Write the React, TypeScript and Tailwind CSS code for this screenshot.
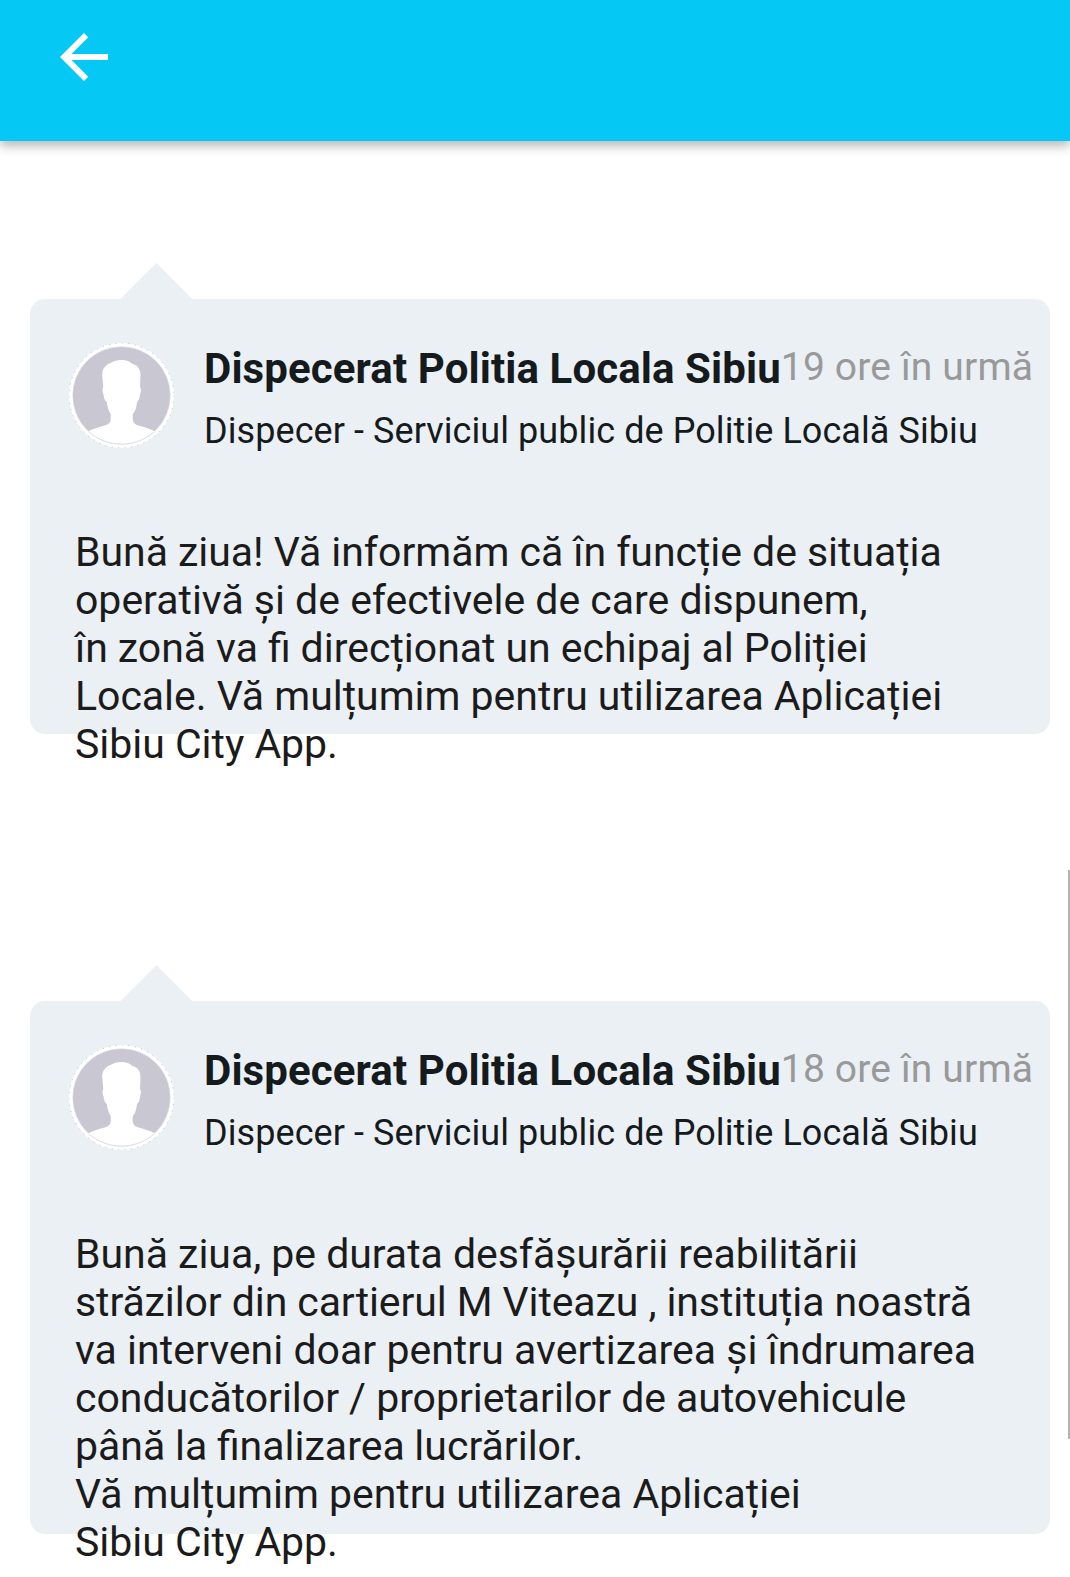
type Line = { text: string; tracking: string };

type Reply = {
  time: string;
  lines: Line[];
  height: string;
};

const replies: Reply[] = [
  {
    time: "19 ore în urmă",
    height: "h-[435px]",
    lines: [
      { text: "Bună ziua! Vă informăm că în funcție de situația", tracking: "tracking-[-0.04px]" },
      { text: "operativă și de efectivele de care dispunem,", tracking: "tracking-[-0.01px]" },
      { text: "în zonă va fi direcționat un echipaj al Poliției", tracking: "[word-spacing:-0.2px]" },
      { text: "Locale. Vă mulțumim pentru utilizarea Aplicației", tracking: "tracking-[-0.03px]" },
      { text: "Sibiu City App.", tracking: "tracking-[-0.03px]" },
    ],
  },
  {
    time: "18 ore în urmă",
    height: "h-[533px]",
    lines: [
      { text: "Bună ziua, pe durata desfășurării reabilitării", tracking: "tracking-[-0.035px]" },
      { text: "străzilor din cartierul M Viteazu , instituția noastră", tracking: "tracking-[-0.095px]" },
      { text: "va interveni doar pentru avertizarea și îndrumarea", tracking: "tracking-[0.02px]" },
      { text: "conducătorilor / proprietarilor de autovehicule", tracking: "tracking-[-0.035px]" },
      { text: "până la finalizarea lucrărilor.", tracking: "[word-spacing:-0.5px]" },
      { text: "Vă mulțumim pentru utilizarea Aplicației", tracking: "tracking-[-0.02px]" },
      { text: "Sibiu City App.", tracking: "tracking-[-0.03px]" },
    ],
  },
];

function Avatar() {
  return (
    <svg viewBox="0.5 0.5 105 105" className="mr-[30px] size-[105px] shrink-0">
      <circle cx="53" cy="53" r="52.5" fill="#fff" />
      <circle cx="53" cy="53" r="52.4" fill="none" stroke="#7f8688" strokeWidth="0.5" strokeDasharray="1 5.5" />
      <circle cx="53" cy="53" r="48.7" fill="#c9c7d2" stroke="#dedde4" strokeWidth="0.6" />
      <path
        d="M53 17.500C58 17.500 61 19 64 21.500C69 22 72 27 72 33L71.500 45C73 45.500 72.500 49 71.600 52C71 56 70 58.500 68.500 59.500C68 64 67 69 64.200 71.500L64.200 76C64.500 80 66 81.800 70 83C76 84.800 82 86.500 87 89.200C78 97.500 66 102 53 102C40 102 28 97.500 19 89.200C24 86.500 30 84.800 36 83C40.500 81.800 42 80 42.200 76L42.200 71.500C40 69 39 64 38.300 59.500C36.500 58.500 35.500 56 35 52C33.800 49 33.600 45.500 34.800 45L33.700 33C33.500 26 37 22.500 42 20.500C45 18.500 48.500 17.500 53 17.500Z"
        fill="#fff"
      />
      <path d="M20 89C38.500 105.800 67.500 105.800 86 89" fill="none" stroke="#d8d7dc" strokeWidth="0.9" />
    </svg>
  );
}

function ReplyCard({ reply }: { reply: Reply }) {
  return (
    <article>
      <svg viewBox="0 0 72 36" className="ml-[90px] block h-9 w-[72px]">
        <path d="M0.500 36L36.500 0L72 36Z" fill="#ebf0f5" />
      </svg>
      <div className={`${reply.height} rounded-[15px] bg-[#ebf0f5]`}>
        <div className="flex pt-[44px] pl-[39px]">
          <Avatar />
          <div className="whitespace-nowrap text-[#151a1d]">
            <div className="flex h-[56px] items-start">
              <h2 className="mt-[1px] text-[42px] leading-[50px] font-bold tracking-[0.1px]">
                {"Dispecerat Politia Locala Sibiu"}
              </h2>
              <time className="text-[39px] leading-[48px] tracking-[0.17px] text-[#999999]">{reply.time}</time>
            </div>
            <p className="mt-[11px] text-[36px] leading-[42px] tracking-[0.075px]">
              Dispecer - Serviciul public de Politie Locală Sibiu
            </p>
          </div>
        </div>
        <div className="mt-[76px] pl-[45px] text-[41px] leading-[48px] whitespace-nowrap text-[#1b1b1b]">
          {reply.lines.map((line) => (
            <p key={line.text} className={line.tracking}>
              {line.text}
            </p>
          ))}
        </div>
      </div>
    </article>
  );
}

export default function App() {
  return (
    <div className="relative h-[1577px] w-[1070px] overflow-hidden bg-white font-['Roboto',sans-serif]">
      <header className="h-[141px] bg-[#06c8f5] pt-[21px] pl-12 shadow-[0_5px_10px_rgba(0,0,0,0.28)]">
        <button aria-label="Înapoi" className="block size-[72px]">
          <svg viewBox="0 0 24 24" className="size-[72px]" fill="#fff">
            <path d="M20 11H7.830L13.420 5.410L12 4L4 12L12 20L13.410 18.590L7.830 13H20V11Z" />
          </svg>
        </button>
      </header>
      <main className="flex flex-col gap-[231px] pt-[122px] pr-5 pl-[30px]">
        {replies.map((reply) => (
          <ReplyCard key={reply.time} reply={reply} />
        ))}
      </main>
      <div className="absolute top-[870px] right-0 h-[569px] w-[2px] bg-[#b3b3b3]" />
    </div>
  );
}
